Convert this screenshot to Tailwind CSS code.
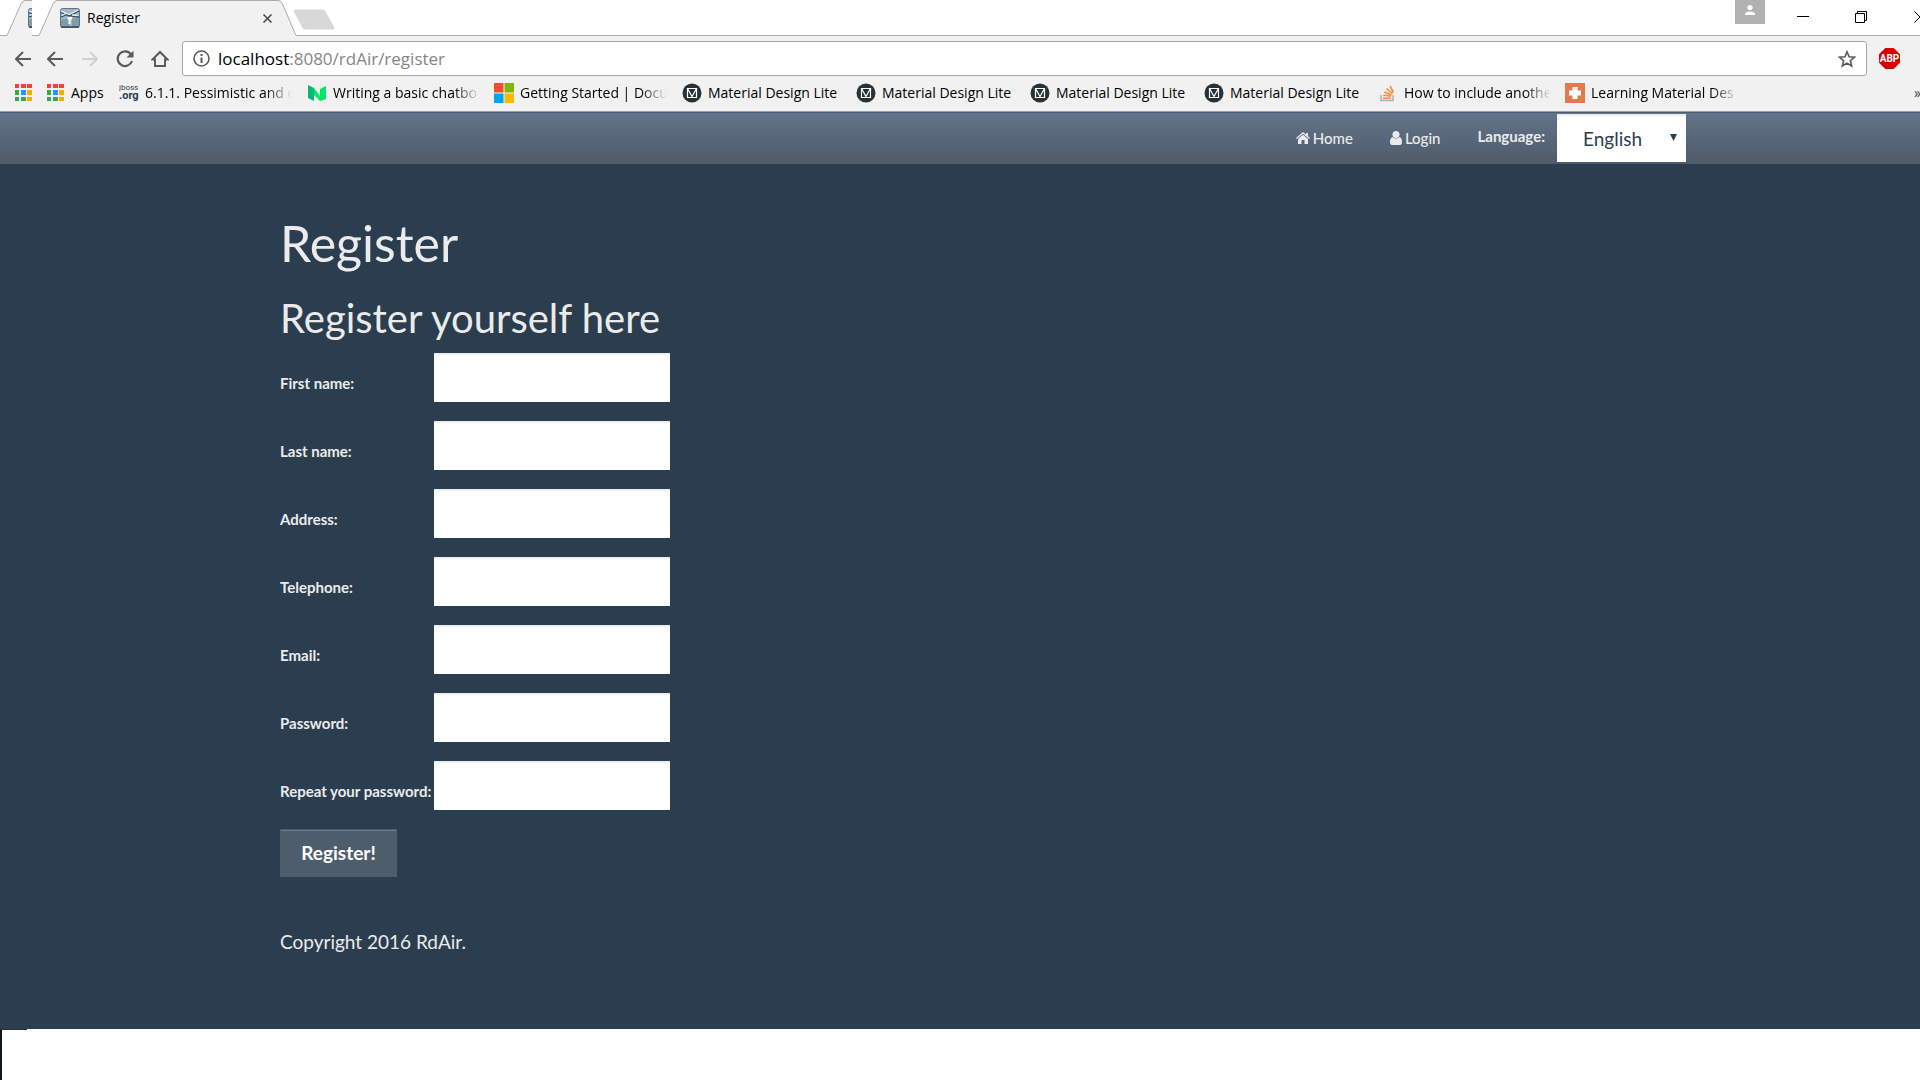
<!DOCTYPE html>
<html lang="en">
<head>
<meta charset="utf-8">
<title>Register</title>
<script src="https://cdn.jsdelivr.net/npm/@tailwindcss/browser@4"></script>
</head>
<body class="min-h-screen flex flex-col bg-white overflow-x-hidden">
<svg class="hidden">
  <symbol id="apps" viewBox="0 0 17 17">
    <path fill="#f44336" d="M0 0h4v4H0zM6 0h5v4H6zM12 0h5v4h-5z"/>
    <path fill="#34a853" d="M0 6h4v5H0zM0 13h4v4H0zM6 13h5v4H6z"/>
    <path fill="#2196f3" d="M6 6h5v5H6z"/>
    <path fill="#fbab00" d="M12 6h5v5h-5zM12 13h5v4h-5z"/>
  </symbol>
  <symbol id="mdl" viewBox="0 0 20 20">
    <circle cx="10" cy="10" r="9.500" fill="#263238"/>
    <path d="M5.500 5.500h9v9h-9zM5.500 5.500l4.500 8 4.500-8" fill="none" stroke="#fff" stroke-width="1.200"/>
  </symbol>
  <symbol id="plane" viewBox="0 0 20 20">
    <rect x=".5" y=".5" width="19" height="19" rx="2" fill="#a3b6c2" stroke="#5c7386"/>
    <path fill="#7f9cad" d="M1 12l8-2v9H1zM12 11l7-2v10h-7z"/>
    <path d="M1 4.500l8 3.500 10-5M1 9l6-2.500 5 1.500 7 1" fill="none" stroke="#34495c" stroke-width="1.300"/>
    <path d="M1 3l8 3.500L18 2M2 7.500L7 5M12 7l6 .5" fill="none" stroke="#e5edf1" stroke-width="1.300"/>
    <path d="M7.500 9h4.500v2.500h-1.500V16h-2v-4.500h-1z" fill="#f4f8fa"/>
    <path d="M1 19h18" stroke="#34495c" stroke-width="1.500"/>
  </symbol>
  <symbol id="back" viewBox="0 0 16 16">
    <path d="M16 8H1.500M8 1L1 8l7 7" fill="none" stroke="currentColor" stroke-width="2"/>
  </symbol>
</svg>

<header class="bg-[#f1f1f1] font-['Open_Sans','Noto_Sans',sans-serif] text-black">
  <div class="relative flex h-9 bg-white text-sm">
    <svg class="absolute inset-0 w-full h-9">
      <path d="M0 35.500H7L21 4Q23 .5 25 .5H32V36H0z" fill="#f1f1f1"/>
      <path d="M0 35.500H7L21 4Q23 .5 25 .5H32" fill="none" stroke="#ababab"/>
      <path d="M32 35.500H39L53 4Q55 .5 57 .5H278Q281 .5 282 3L296 35.500V36H32z" fill="#f1f1f1"/>
      <path d="M32 35.500H39L53 4Q55 .5 57 .5H278Q281 .5 282 3L296 35.500H4000" fill="none" stroke="#ababab"/>
      <path d="M296 9.500H322Q325 9.500 326 12L334 27Q335 29.500 332 29.500H306Q303 29.500 302 27L294 12Q293 9.500 296 9.500z" fill="#d8d8d8"/>
    </svg>
    <div class="relative flex items-center w-full h-9 pl-7">
      <div class="w-1 h-5 overflow-hidden"><svg class="size-5"><use href="#plane"/></svg></div>
      <svg class="ml-7 size-5 shrink-0"><use href="#plane"/></svg>
      <span class="ml-[7px] w-44">Register</span>
      <button aria-label="Close tab"><svg class="size-[9px]" viewBox="0 0 9 9"><path d="M.5.5l8 8M8.500.5l-8 8" stroke="#444" stroke-width="1.500"/></svg></button>
      <div class="ml-auto -mr-1.5 flex h-9 items-start">
        <button aria-label="Profile" class="mr-8 flex justify-center w-[30px] h-6 bg-[#b1b1b1]"><svg class="mt-1 w-3 h-3" viewBox="0 0 12 12"><circle cx="6" cy="3.500" r="2.600" fill="#fff"/><path d="M1 11V9.500Q2 7.500 6 7.500t5 2V11z" fill="#fff"/></svg></button>
        <button aria-label="Minimize" class="mr-[46px] pt-2.5"><svg class="size-3" viewBox="0 0 12 12"><path d="M0 6.500h12" stroke="#000"/></svg></button>
        <button aria-label="Restore" class="mr-[47px] pt-[11px]"><svg class="size-3" viewBox="0 0 12 12"><path d="M.5 2.500h9v9h-9zM2.500 2V.5h9v9H10" fill="none" stroke="#000"/></svg></button>
        <button aria-label="Close window" class="pt-[11px]"><svg class="size-3" viewBox="0 0 12 12"><path d="M.5.5l11 11M11.500.5l-11 11" stroke="#000"/></svg></button>
      </div>
    </div>
  </div>

  <div class="flex items-center pt-[5px] pl-[15px] pr-5 text-[#5a5a5a]">
    <button aria-label="Back"><svg class="size-4"><use href="#back"/></svg></button>
    <button aria-label="Back" class="ml-4"><svg class="size-4"><use href="#back"/></svg></button>
    <button aria-label="Forward" class="ml-[19px] text-[#d0d0d0]"><svg class="size-4 rotate-180"><use href="#back"/></svg></button>
    <button aria-label="Reload" class="ml-[18px]"><svg class="size-[18px]" viewBox="0 0 18 18"><path d="M15 4.500A7.300 7.300 0 1 0 16 11" fill="none" stroke="currentColor" stroke-width="2.200"/><path d="M17.500.8V7.500H10.500z" fill="currentColor"/></svg></button>
    <button aria-label="Home" class="ml-[17px]"><svg class="size-[18px]" viewBox="0 0 18 18"><path d="M1.500 9.500L9 2l7.500 7.500H14V16H4V9.500z" fill="none" stroke="currentColor" stroke-width="2"/></svg></button>
    <div class="ml-[13px] flex grow items-center h-[35px] rounded-[3px] border border-[#a6a6a6] bg-white px-2.5">
      <svg class="size-[17px]" viewBox="0 0 17 17"><circle cx="8.500" cy="8.500" r="7.500" fill="none" stroke="currentColor" stroke-width="1.600"/><path d="M7.500 4h2v2h-2zM7.500 7.500h2v5.500h-2z" fill="currentColor"/></svg>
      <div class="ml-2 text-[17px] leading-6 text-[#858585] grow"><span class="text-black">localhost</span>:8080/rdAir/register</div>
      <button aria-label="Bookmark this page"><svg class="size-[18px]" viewBox="0 0 18 18"><path d="M9 1.800l2.100 5 5.400.4-4.100 3.500 1.300 5.300L9 13.100 4.300 16l1.300-5.300L1.500 7.200l5.400-.4z" fill="none" stroke="currentColor" stroke-width="1.600"/></svg></button>
    </div>
    <button aria-label="Adblock Plus" class="ml-3 flex items-center justify-center size-[21px] bg-[#d50000] font-[Roboto,sans-serif] text-[10px] font-bold text-white [clip-path:polygon(30%_0,70%_0,100%_30%,100%_70%,70%_100%,30%_100%,0_70%,0_30%)]">ABP</button>
  </div>

  <nav class="flex items-center h-9 pl-[15px] pb-0.5 border-b border-[#a0a0a0] text-sm whitespace-nowrap">
    <svg class="size-[17px] shrink-0"><use href="#apps"/></svg>
    <a href="#" class="ml-[15px] flex items-center gap-[7px] w-[72px]"><svg class="size-[17px] shrink-0"><use href="#apps"/></svg>Apps</a>
    <a href="#" class="flex items-center gap-1.5 w-[188px] shrink-0"><svg class="size-5 shrink-0" viewBox="0 0 20 20" font-family="Roboto, sans-serif" fill="#2c3e50"><text x="0" y="7" font-size="8">jboss</text><text x="0" y="16" font-size="11" font-weight="bold">.org</text></svg><span class="w-[147px] overflow-hidden [mask-image:linear-gradient(to_right,black_82%,transparent)]">6.1.1. Pessimistic and o</span></a>
    <a href="#" class="flex items-center gap-1.5 w-[187px] shrink-0"><svg class="size-5 shrink-0" viewBox="0 0 20 20"><path d="M1 2l6 3v13l-6-3z" fill="#02b875"/><path d="M7 5l6 8 6-10v13l-6 2-6-6z" fill="#00e76b"/><path d="M13 6l6-3v12l-6 3z" fill="#00e76b"/></svg><span class="w-[147px] overflow-hidden [mask-image:linear-gradient(to_right,black_82%,transparent)]">Writing a basic chatbo</span></a>
    <a href="#" class="flex items-center gap-1.5 w-[188px] shrink-0"><svg class="size-5 shrink-0" viewBox="0 0 20 20"><path fill="#f25022" d="M0 0h9.500v9.500H0z"/><path fill="#7fba00" d="M10.500 0H20v9.500h-9.500z"/><path fill="#00a4ef" d="M0 10.500h9.500V20H0z"/><path fill="#ffb900" d="M10.500 10.500H20V20h-9.500z"/></svg><span class="w-[147px] overflow-hidden [mask-image:linear-gradient(to_right,black_82%,transparent)]">Getting Started | Docu</span></a>
    <a href="#" class="flex items-center gap-1.5 w-[174px] shrink-0"><svg class="size-5 shrink-0"><use href="#mdl"/></svg>Material Design Lite</a>
    <a href="#" class="flex items-center gap-1.5 w-[174px] shrink-0"><svg class="size-5 shrink-0"><use href="#mdl"/></svg>Material Design Lite</a>
    <a href="#" class="flex items-center gap-1.5 w-[174px] shrink-0"><svg class="size-5 shrink-0"><use href="#mdl"/></svg>Material Design Lite</a>
    <a href="#" class="flex items-center gap-1.5 w-[174px] shrink-0"><svg class="size-5 shrink-0"><use href="#mdl"/></svg>Material Design Lite</a>
    <a href="#" class="flex items-center gap-1.5 w-[187px] shrink-0"><svg class="size-5 shrink-0" viewBox="0 0 20 20" fill="none"><path d="M3 12v5.500h12V12" stroke="#aab1b5" stroke-width="1.500"/><path d="M5 15.200h8M5.300 12.300l7.800 1M6.300 9l7.200 3M8.500 5.500l6 5.200M12 3l3.500 6.500" stroke="#ff8c3b" stroke-width="1.600"/></svg><span class="w-[147px] overflow-hidden [mask-image:linear-gradient(to_right,black_82%,transparent)]">How to include anothe</span></a>
    <a href="#" class="flex items-center gap-1.5 w-[188px] shrink-0"><svg class="size-5 shrink-0" viewBox="0 0 20 20"><path fill="#e07b4f" d="M0 0h20v20H0z"/><path fill="#fff" d="M7.500 4h5v3.500H16v5h-3.500V16h-5v-3.500H4v-5h3.500z"/></svg><span class="w-[147px] overflow-hidden [mask-image:linear-gradient(to_right,black_82%,transparent)]">Learning Material Des</span></a>
    <button aria-label="More bookmarks" class="ml-auto w-1.5 overflow-hidden text-left text-[#444]">»</button>
  </nav>
</header>

<div class="flex flex-col grow bg-[#2b3e50] text-[#ebebeb] font-[Lato,sans-serif]">
  <nav class="flex items-start justify-end h-[52px] pr-[234px] border-t border-[#4e5d6c] bg-linear-to-b from-[#62748a] to-[#4e5b68] text-[15px] leading-[50px]">
    <a href="#" class="flex items-center gap-[3px] font-medium"><svg class="w-3.5 h-3" viewBox="0 0 14 12" fill="currentColor"><path d="M7 0l3 2.600V1h2v3.300L14 6l-.8 1L7 1.700.8 7 0 6z"/><path d="M7 2.800l5 4.200v5H8.500V8h-3v4H2V7z"/></svg>Home</a>
    <a href="#" class="ml-[37px] flex items-center gap-[3px] font-medium"><svg class="w-3 h-3.5" viewBox="0 0 12 14" fill="currentColor"><circle cx="6" cy="3.500" r="3.500"/><path d="M2.500 6Q6 9 9.500 6 12 7 12 11q0 3-2 3H2q-2 0-2-3 0-4 2.500-5z"/></svg>Login</a>
    <label for="lang" class="ml-[37px] leading-[47px] font-bold">Language:</label>
    <div class="relative ml-3 pt-px">
      <select id="lang" class="block appearance-none w-[129px] h-12 bg-white pl-[26px] text-[19px] text-[#2b3e50] shadow-[inset_0_2px_1px_#eee]"><option>English</option><option>Spanish</option></select>
      <svg class="pointer-events-none absolute right-[9px] top-[21px] w-[7px] h-[7px]" viewBox="0 0 7 7"><path d="M0 0h7L3.500 7z" fill="#2b3e50"/></svg>
    </div>
  </nav>

  <main class="pl-[280px] pt-[51px]">
    <h1 class="text-[50px] leading-[56px]">Register</h1>
    <h2 class="mt-[23px] text-[40px] leading-12">Register yourself here</h2>
    <form class="mt-[11px]">
      <div class="grid grid-cols-[154px_236px] gap-y-[19px] items-center text-[15px] font-bold whitespace-nowrap">
        <label for="first" class="pt-3">First name:</label><input id="first" class="h-[49px] bg-white shadow-[inset_0_2px_1px_#eee]">
        <label for="last" class="pt-3">Last name:</label><input id="last" class="h-[49px] bg-white shadow-[inset_0_2px_1px_#eee]">
        <label for="address" class="pt-3">Address:</label><input id="address" class="h-[49px] bg-white shadow-[inset_0_2px_1px_#eee]">
        <label for="phone" class="pt-3">Telephone:</label><input id="phone" type="tel" class="h-[49px] bg-white shadow-[inset_0_2px_1px_#eee]">
        <label for="email" class="pt-3">Email:</label><input id="email" type="email" class="h-[49px] bg-white shadow-[inset_0_2px_1px_#eee]">
        <label for="pass" class="pt-3">Password:</label><input id="pass" type="password" class="h-[49px] bg-white shadow-[inset_0_2px_1px_#eee]">
        <label for="repeat" class="pt-3">Repeat your password:</label><input id="repeat" type="password" class="h-[49px] bg-white shadow-[inset_0_2px_1px_#eee]">
      </div>
      <button type="button" class="mt-[19px] block w-[117px] h-12 border border-[#4e5d6c] bg-[#4e5d6c] text-[19px] font-bold text-white shadow-[inset_0_1px_0_#6b7a89]">Register!</button>
    </form>
    <footer class="mt-[51px] text-[19px] leading-7">Copyright 2016 RdAir.</footer>
  </main>
</div>
<div class="h-[51px] bg-white"><div class="w-[27px] h-px bg-[#2b2f45]"></div><div class="w-0.5 h-[50px] bg-[#0b161e]"></div></div>
</body>
</html>
